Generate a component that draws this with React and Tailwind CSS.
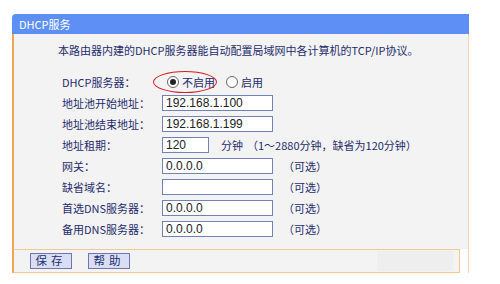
const cjk = { fontFamily: '"Noto Sans CJK SC", "Liberation Sans", sans-serif' };
const latin = { fontFamily: '"Liberation Sans", Arial, sans-serif' };

function Radio({ checked }) {
  return (
    <span className="flex h-[12px] w-[12px] items-center justify-center rounded-full border border-[#666] bg-white">
      {checked && <span className="h-[6px] w-[6px] rounded-full bg-[#222]" />}
    </span>
  );
}

function Field({ value, width = "w-[111px]" }) {
  return (
    <div
      className={`flex h-[16px] ${width} items-center border border-[#7182b8] bg-white pl-[3px] text-[12px] leading-none text-[#222]`}
      style={latin}
    >
      {value}
    </div>
  );
}

function Row({ label, children }) {
  return (
    <div className="flex h-[21px] items-center">
      <div className="w-[100px] shrink-0">{label}</div>
      {children}
    </div>
  );
}

const Hint = ({ children }) => <span className="ml-[10px]">{children}</span>;

function Btn({ children }) {
  return (
    <button className="flex h-[16px] w-[42px] items-center justify-center border border-[#6f76ad] bg-[#d9def4] text-[11.5px] leading-none tracking-[4px] text-[#22306e]">
      {children}
    </button>
  );
}

export default function App() {
  return (
    <div className="h-[284px] w-[500px] bg-white pl-[12px] pt-[14px] text-[11px] leading-[14px] text-[#1f2c6c]" style={cjk}>
      <div className="w-[457px]">
        <div className="flex h-[20px] items-center rounded-tl-[4px] bg-[#5e8ff4] pl-[7px] text-white">
          DHCP服务
        </div>

        <div className="h-[215px] border-l-2 border-r border-l-[#f2a451] border-r-[#f3d5b0] bg-[#f3f3f3] pt-[9px]">
          <p className="pl-[44px]">本路由器内建的DHCP服务器能自动配置局域网中各计算机的TCP/IP协议。</p>

          <div className="mt-[14px] pl-[48px]">
            <Row label="DHCP服务器：">
              <div className="relative flex items-center">
                <span className="ml-[5px]"><Radio checked /></span>
                <span className="ml-[3px]">不启用</span>
                <span className="ml-[11px]"><Radio /></span>
                <span className="ml-[3px]">启用</span>
                <span className="pointer-events-none absolute left-[-9px] top-[-4px] h-[22px] w-[64px] rounded-[50%] border-[1.5px] border-[#d41f23]" />
              </div>
            </Row>
            <Row label="地址池开始地址：">
              <Field value="192.168.1.100" />
            </Row>
            <Row label="地址池结束地址：">
              <Field value="192.168.1.199" />
            </Row>
            <Row label="地址租期：">
              <Field value="120" width="w-[47px]" />
              <span className="ml-[12px]">分钟</span>
              <span className="ml-[4px]">（1～2880分钟，缺省为120分钟）</span>
            </Row>
            <Row label="网关：">
              <Field value="0.0.0.0" />
              <Hint>（可选）</Hint>
            </Row>
            <Row label="缺省域名：">
              <Field value="" />
              <Hint>（可选）</Hint>
            </Row>
            <Row label="首选DNS服务器：">
              <Field value="0.0.0.0" />
              <Hint>（可选）</Hint>
            </Row>
            <Row label="备用DNS服务器：">
              <Field value="0.0.0.0" />
              <Hint>（可选）</Hint>
            </Row>
          </div>
        </div>

        <div className="flex border-r border-r-[#f3d5b0]">
          <div className="flex h-[24px] flex-1 items-center border-y border-l-2 border-r border-y-[#f2c991] border-l-[#f2a451] border-r-[#f2c991] bg-[#f3f3f3]">
            <div className="ml-[16px] flex gap-[16px]">
              <Btn>保存</Btn>
              <Btn>帮助</Btn>
            </div>
            <div className="ml-auto mr-[6px] h-[20px] w-[76px] bg-[#eeeeee]" />
          </div>
          <div className="w-[8px]" />
        </div>
      </div>
    </div>
  );
}
